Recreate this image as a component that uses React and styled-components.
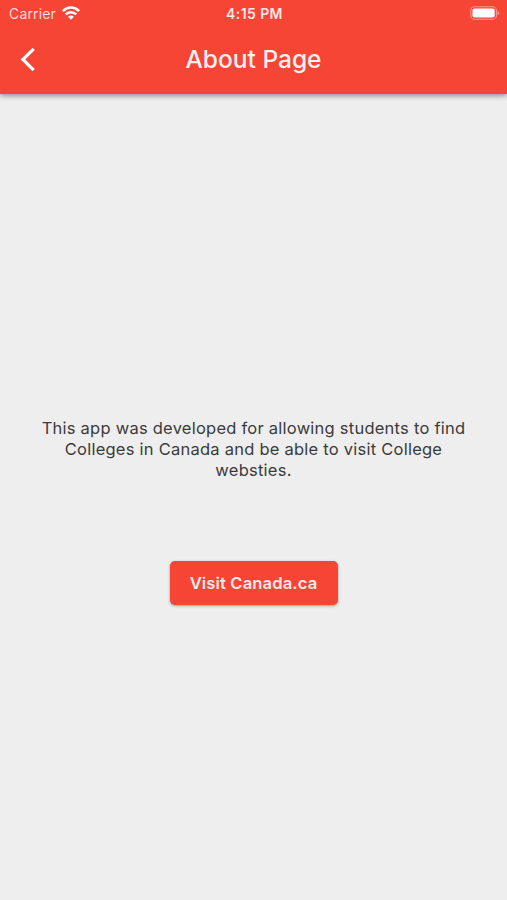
import React from 'react'
import styled, { createGlobalStyle } from 'styled-components'

const GlobalStyle = createGlobalStyle`
  * {
    box-sizing: border-box;
  }

  body {
    margin: 0;
    background-color: #eeeeee;
    font-family: Inter, 'Liberation Sans', sans-serif;
  }
`

const Screen = styled.div`
  display: flex;
  flex-direction: column;
  height: 900px;
  overflow: hidden;
  background-color: #eeeeee;
`

const Header = styled.header`
  height: 94px;
  background-color: #f64435;
  color: #fff;
  box-shadow: 0 2px 5px rgba(0, 0, 0, 0.38);
`

const StatusBar = styled.div`
  display: grid;
  grid-template-columns: 1fr auto 1fr;
  align-items: center;
  height: 27px;
  padding: 0 7px 0 9px;
`

const Carrier = styled.div`
  display: flex;
  align-items: center;
  gap: 6px;
  font-size: 14px;
  line-height: 27px;
  letter-spacing: 0.15px;
  color: #fddcd9;
`

const Time = styled.div`
  padding-top: 1px;
  font-size: 14px;
  font-weight: 600;
  line-height: 26px;
  letter-spacing: 0.4px;
  color: #fde8e5;
`

const Battery = styled.svg`
  justify-self: end;
`

const NavBar = styled.div`
  display: grid;
  grid-template-columns: 56px 1fr 56px;
  align-items: center;
  height: 66px;
`

const BackButton = styled.button`
  display: flex;
  padding: 0 0 1px 20px;
  border: 0;
  background: none;
  color: inherit;
`

const Title = styled.h1`
  margin: 0;
  padding-bottom: 2px;
  font-size: 24.5px;
  font-weight: 500;
  line-height: 30px;
  letter-spacing: 0;
  text-align: center;
  color: #fff1ef;
`

const Content = styled.main`
  display: flex;
  flex: 1;
  flex-direction: column;
  align-items: center;
  padding-top: 324px;
`

const Description = styled.p`
  width: 440px;
  margin: 0;
  font-size: 16.5px;
  line-height: 20.8px;
  letter-spacing: 0.24px;
  text-align: center;
  color: #3b3b3b;
`

const VisitButton = styled.button`
  width: 168px;
  height: 44px;
  margin-top: 81px;
  padding: 0;
  border: 0;
  border-radius: 5px;
  background-color: #f64435;
  box-shadow: 0 1px 3px rgba(0, 0, 0, 0.35);
  font-family: inherit;
  font-size: 16.6px;
  font-weight: 600;
  letter-spacing: 0.12px;
  white-space: nowrap;
  color: #fdeae8;
`

const WifiIcon = () => (
  <svg width="18" height="15" viewBox="0 0 18 15" fill="none" stroke="#fff" strokeWidth="2.5">
    <path d="M0.9 5.1C5.5 0.4 12.5 0.4 17.1 5.1" />
    <path d="M3.7 8.4C6.7 5.4 11.3 5.4 14.3 8.4" />
    <path d="M9 13.8L6 10.8C7.8 9.2 10.2 9.2 12 10.8Z" fill="#fff" stroke="none" />
  </svg>
)

const BatteryIcon = () => (
  <Battery width="30" height="15" viewBox="0 0 30 15">
    <rect x="0.8" y="0.8" width="25.6" height="12.4" rx="3.8" fill="none" stroke="#fa9c94" strokeWidth="1.1" />
    <rect x="2.5" y="2.5" width="22.2" height="9" rx="2" fill="#fff" />
    <path d="M27.6 5C29.8 5.6 29.8 8.4 27.6 9Z" fill="#fa9c94" />
  </Battery>
)

const BackIcon = () => (
  <svg width="16" height="25" viewBox="0 0 16 25" fill="none" stroke="#fff" strokeWidth="3.2">
    <path d="M13.7 1.8L2.9 12.5L13.7 23.2" />
  </svg>
)

const App = () => (
  <>
    <GlobalStyle />
    <Screen>
      <Header>
        <StatusBar>
          <Carrier>
            Carrier
            <WifiIcon />
          </Carrier>
          <Time>4:15 PM</Time>
          <BatteryIcon />
        </StatusBar>
        <NavBar>
          <BackButton aria-label="Back">
            <BackIcon />
          </BackButton>
          <Title>About Page</Title>
        </NavBar>
      </Header>
      <Content>
        <Description>
          This app was developed for allowing students to find
          <br />
          Colleges in Canada and be able to visit College
          <br />
          websties.
        </Description>
        <VisitButton>Visit Canada.ca</VisitButton>
      </Content>
    </Screen>
  </>
)

export default App
